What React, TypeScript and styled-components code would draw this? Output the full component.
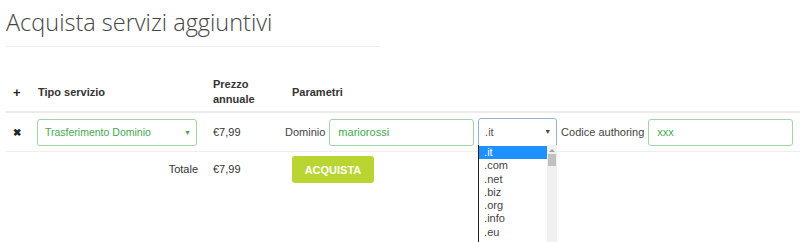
import React from 'react';
import styled, { createGlobalStyle } from 'styled-components';

const GlobalStyle = createGlobalStyle`
  html, body { margin: 0; padding: 0; background: #fff; }
  body { font-family: "Liberation Sans", Arial, sans-serif; color: #333; overflow: hidden; }
`;

const Page = styled.div`
  width: 800px;
  height: 242px;
  padding-left: 6px;
  box-sizing: border-box;
  overflow: hidden;
`;

const Title = styled.h2`
  margin: 0;
  padding-top: 7px;
  font-family: "Open Sans", sans-serif;
  font-weight: 300;
  font-size: 23.5px;
  line-height: 31px;
  color: #444;
`;

const Rule = styled.hr`
  width: 374px;
  margin: 8px 0 0 0;
  border: 0;
  border-top: 1px solid #eee;
`;

const Table = styled.table`
  margin-top: 27px;
  width: 794px;
  border-collapse: collapse;
  table-layout: fixed;
  font-size: 11px;
`;

const Th = styled.th<{ $w?: number }>`
  box-sizing: border-box;
  width: ${({ $w }) => ($w ? `${$w}px` : 'auto')};
  text-align: left;
  font-weight: bold;
  padding: 3px 8px 4px;
  line-height: 15px;
  vertical-align: middle;
  border-bottom: 2px solid #ececec;
`;

const Td = styled.td<{ $right?: boolean; $line?: boolean; $top?: number }>`
  box-sizing: border-box;
  padding: ${({ $top }) => $top ?? 5}px 7px 5px 8px;
  vertical-align: ${({ $top }) => ($top !== undefined ? 'top' : 'middle')};
  line-height: ${({ $top }) => ($top !== undefined ? '27px' : 'normal')};
  text-align: ${({ $right }) => ($right ? 'right' : 'left')};
  border-bottom: ${({ $line }) => ($line ? '1px solid #eee' : 'none')};
`;

const IconCell = styled.span<{ $size: number }>`
  display: block;
  font-weight: bold;
  font-size: ${({ $size }) => $size}px;
  color: #222;
  margin-left: -1px;
`;

const GreenSelect = styled.div`
  position: relative;
  width: 160px;
  height: 27px;
  box-sizing: border-box;
  border: 1px solid #9fd6a6;
  border-radius: 3px;
  padding-left: 7px;
  line-height: 25px;
  font-size: 10.5px;
  color: #3fa94e;
  margin-left: -1px;
`;

const Caret = styled.span<{ $color: string }>`
  position: absolute;
  right: 5px;
  top: 0;
  font-size: 7px;
  color: ${({ $color }) => $color};
`;

const Params = styled.div`
  display: flex;
  align-items: center;
  gap: 4px;
  margin-left: -7px;
`;

const Label = styled.span`
  color: #444;
  white-space: nowrap;
`;

const TextInput = styled.div<{ $w: number }>`
  width: ${({ $w }) => $w}px;
  height: 27px;
  box-sizing: border-box;
  border: 1px solid #9fd6a6;
  border-radius: 3px;
  padding-left: 8px;
  line-height: 25px;
  color: #3fa94e;
`;

const TldWrap = styled.div`
  position: relative;
`;

const TldSelect = styled.div`
  position: relative;
  width: 79px;
  height: 28px;
  box-sizing: border-box;
  border: 1px solid #8fb3d9;
  border-radius: 3px 3px 0 0;
  padding-left: 6px;
  line-height: 26px;
  color: #555;
`;

const List = styled.div`
  position: absolute;
  top: 27px;
  left: 0;
  width: 79px;
  height: 120px;
  background: #fff;
  border-left: 1px solid #222;
  box-sizing: border-box;
  display: flex;
  z-index: 2;
`;

const Options = styled.div`
  flex: 1;
  padding-top: 1px;
`;

const Option = styled.div<{ $active?: boolean }>`
  height: 13.3px;
  line-height: 13px;
  padding-left: 5px;
  background: ${({ $active }) => ($active ? '#1e90ff' : 'transparent')};
  color: ${({ $active }) => ($active ? '#fff' : '#444')};
`;

const Scrollbar = styled.div`
  width: 10px;
  background: #f1f1f1;
`;

const ScrollArrow = styled.div`
  height: 9px;
  display: flex;
  justify-content: center;
  align-items: center;
`;

const Thumb = styled.div`
  margin: 0 1px;
  height: 12px;
  background: #c1c1c1;
`;

const BuyButton = styled.button`
  display: block;
  background: #b8d531;
  border: 0;
  border-radius: 3px;
  color: #fff;
  font-family: "Liberation Sans", Arial, sans-serif;
  font-weight: bold;
  font-size: 11px;
  height: 27px;
  width: 82px;
  padding: 0;
`;

const tlds = ['.it', '.com', '.net', '.biz', '.org', '.info', '.eu', '.us'];

export default function App() {
  return (
    <Page>
      <GlobalStyle />
      <Title>Acquista servizi aggiuntivi</Title>
      <Rule />
      <Table>
        <thead>
          <tr>
            <Th $w={24}>
              <IconCell $size={13}>+</IconCell>
            </Th>
            <Th $w={175}>Tipo servizio</Th>
            <Th $w={79}>
              Prezzo
              <br />
              annuale
            </Th>
            <Th>Parametri</Th>
          </tr>
        </thead>
        <tbody>
          <tr>
            <Td $line>
              <IconCell $size={10}>✖</IconCell>
            </Td>
            <Td $line>
              <GreenSelect>
                Trasferimento Dominio
                <Caret $color="#3fa94e">▼</Caret>
              </GreenSelect>
            </Td>
            <Td $line>€7,99</Td>
            <Td $line>
              <Params>
                <Label>Dominio</Label>
                <TextInput $w={145}>mariorossi</TextInput>
                <TldWrap>
                  <TldSelect>
                    .it
                    <Caret $color="#444">▼</Caret>
                  </TldSelect>
                  <List>
                    <Options>
                      {tlds.map((t, i) => (
                        <Option key={t} $active={i === 0}>
                          {t}
                        </Option>
                      ))}
                    </Options>
                    <Scrollbar>
                      <ScrollArrow>
                        <svg width="6" height="4" viewBox="0 0 6 4">
                          <path d="M0 4 L3 1 L6 4 Z" fill="#a3a3a3" />
                        </svg>
                      </ScrollArrow>
                      <Thumb />
                    </Scrollbar>
                  </List>
                </TldWrap>
                <Label>Codice authoring</Label>
                <TextInput $w={145}>xxx</TextInput>
              </Params>
            </Td>
          </tr>
          <tr>
            <Td $top={4} />
            <Td $top={4} $right>
              Totale
            </Td>
            <Td $top={4}>€7,99</Td>
            <Td $top={4}>
              <BuyButton>ACQUISTA</BuyButton>
            </Td>
          </tr>
        </tbody>
      </Table>
    </Page>
  );
}
